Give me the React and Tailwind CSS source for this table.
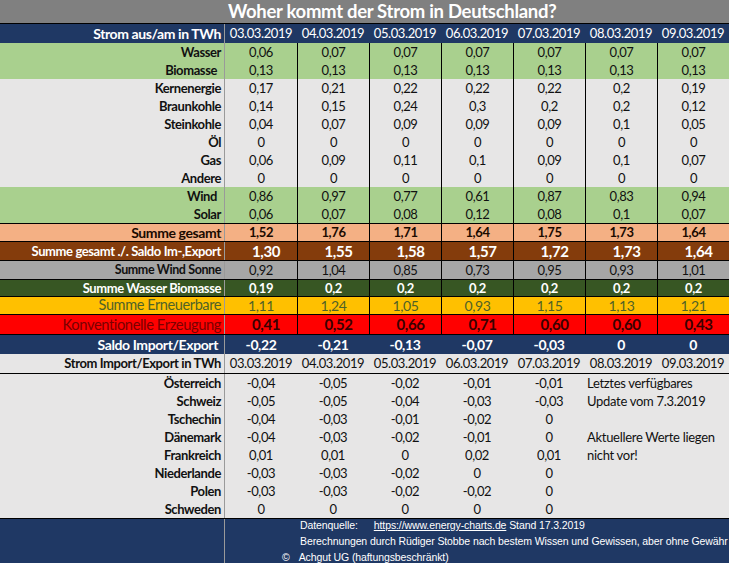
import React from "react";

const dates = ["03.03.2019", "04.03.2019", "05.03.2019", "06.03.2019", "07.03.2019", "08.03.2019", "09.03.2019"];

const sources = [
    { label: "Wasser", bg: "bg-[#a9d08e]", values: ["0,06", "0,07", "0,07", "0,07", "0,07", "0,07", "0,07"] },
    { label: "Biomasse", bg: "bg-[#a9d08e]", pad: "pr-[7px]", values: ["0,13", "0,13", "0,13", "0,13", "0,13", "0,13", "0,13"] },
    { label: "Kernenergie", bg: "bg-[#e7e6e6]", values: ["0,17", "0,21", "0,22", "0,22", "0,22", "0,2", "0,19"] },
    { label: "Braunkohle", bg: "bg-[#e7e6e6]", values: ["0,14", "0,15", "0,24", "0,3", "0,2", "0,2", "0,12"] },
    { label: "Steinkohle", bg: "bg-[#e7e6e6]", values: ["0,04", "0,07", "0,09", "0,09", "0,09", "0,1", "0,05"] },
    { label: "Öl", bg: "bg-[#e7e6e6]", values: ["0", "0", "0", "0", "0", "0", "0"] },
    { label: "Gas", bg: "bg-[#e7e6e6]", values: ["0,06", "0,09", "0,11", "0,1", "0,09", "0,1", "0,07"] },
    { label: "Andere", bg: "bg-[#e7e6e6]", values: ["0", "0", "0", "0", "0", "0", "0"] },
    { label: "Wind", bg: "bg-[#a9d08e]", pad: "pr-[7px]", values: ["0,86", "0,97", "0,77", "0,61", "0,87", "0,83", "0,94"] },
    { label: "Solar", bg: "bg-[#a9d08e]", values: ["0,06", "0,07", "0,08", "0,12", "0,08", "0,1", "0,07"] },
];

const sums = [
    {
        label: "Summe gesamt", h: "h-[18px]", bg: "bg-[#f4b084]",
        labelCls: "text-[14px] font-bold text-[#1a0a00]", valueCls: "font-bold text-[#1a0a00]",
        values: ["1,52", "1,76", "1,71", "1,64", "1,75", "1,73", "1,64"],
    },
    {
        label: "Summe gesamt ./. Saldo Im-,Export", h: "h-[19px]", bg: "bg-[#843c0c]",
        labelCls: "font-bold text-white", valueCls: "font-bold text-white text-[15px] pl-[10px]",
        values: ["1,30", "1,55", "1,58", "1,57", "1,72", "1,73", "1,64"],
    },
    {
        label: "Summe Wind Sonne", h: "h-[19px]", bg: "bg-[#a6a6a6]",
        labelCls: "text-[12.5px] font-bold text-[#111]", valueCls: "text-[#111]",
        values: ["0,92", "1,04", "0,85", "0,73", "0,95", "0,93", "1,01"],
    },
    {
        label: "Summe Wasser Biomasse", h: "h-[17px]", bg: "bg-[#375623]",
        labelCls: "font-bold text-white", valueCls: "font-bold text-white",
        values: ["0,19", "0,2", "0,2", "0,2", "0,2", "0,2", "0,2"],
    },
    {
        label: "Summe Erneuerbare", h: "h-[18px]", bg: "bg-[#ffc000]",
        labelCls: "text-[14.5px] text-[#4f6228]", valueCls: "text-[14px] text-[#4f6228]",
        values: ["1,11", "1,24", "1,05", "0,93", "1,15", "1,13", "1,21"],
    },
    {
        label: "Konventionelle Erzeugung", h: "h-[20px]", bg: "bg-[#ff0000]",
        labelCls: "text-[14.7px] text-[#7a0000]", valueCls: "text-[15px] font-bold text-[#3a0000] pl-[10px]",
        values: ["0,41", "0,52", "0,66", "0,71", "0,60", "0,60", "0,43"],
    },
];

const countries = [
    { label: "Österreich", values: ["-0,04", "-0,05", "-0,02", "-0,01", "-0,01"], note: "Letztes verfügbares" },
    { label: "Schweiz", values: ["-0,05", "-0,05", "-0,04", "-0,03", "-0,03"], note: "Update vom 7.3.2019" },
    { label: "Tschechin", values: ["-0,04", "-0,03", "-0,01", "-0,02", "0"] },
    { label: "Dänemark", values: ["-0,04", "-0,03", "-0,02", "-0,01", "0"], note: "Aktuellere Werte liegen" },
    { label: "Frankreich", values: ["0,01", "0,01", "0", "0,02", "0,01"], note: "nicht vor!" },
    { label: "Niederlande", values: ["-0,03", "-0,03", "-0,02", "0", "0"] },
    { label: "Polen", values: ["-0,03", "-0,03", "-0,02", "-0,02", "0"] },
    { label: "Schweden", values: ["0", "0", "0", "0", "0"] },
];

const gridCols = "grid grid-cols-[225px_repeat(7,72px)]";

const DataRow = ({ label, values, bg, h = "h-[18px]", labelCls = "font-bold text-[#111]", valueCls = "text-[#111]", top = "", pad = "pr-[3px]" }) => (
    <div className={`${gridCols} ${h} ${bg} ${top} items-center`}>
        <div className={`h-full flex items-center justify-end ${pad} border-r border-[#9a9a9a] whitespace-nowrap ${labelCls}`}>{label}</div>
        {values.map((v, i) => (
            <div key={i} className={`h-full flex items-center justify-center ${i > 0 ? "border-l border-black" : ""} ${valueCls}`}>{v}</div>
        ))}
    </div>
);

export default function App() {
    return (
        <div className="w-[729px] h-[563px] overflow-hidden bg-[#e7e6e6] text-[13px] tracking-[-0.4px] leading-none" style={{ fontFamily: "Lato, 'Open Sans', sans-serif" }}>
            {/* title */}
            <div className="flex h-[24px] bg-[#808080] border-b border-black">
                <div className="w-[225px]" />
                <p className="pl-[3px] text-[18.5px] tracking-[-0.3px] font-bold text-white leading-[23px]">Woher kommt der Strom in Deutschland?</p>
            </div>

            {/* header */}
            <div className={`${gridCols} h-[19px] bg-[#1f3864] text-white`}>
                <div className="flex items-center justify-end pr-[3px] text-[14px] font-bold border-r border-[#9a9a9a]">Strom aus/am in TWh</div>
                {dates.map((d) => (
                    <div key={d} className="flex items-center justify-center">{d}</div>
                ))}
            </div>

            {sources.map((r) => (
                <DataRow key={r.label} {...r} />
            ))}

            {sums.map((r) => (
                <DataRow key={r.label} {...r} top="border-t border-black" />
            ))}

            {/* saldo */}
            <div className={`${gridCols} h-[20px] bg-[#1f3864] text-white font-bold text-[14px] border-t border-black`}>
                <div className="flex items-center justify-end pr-[6px] border-r border-[#9a9a9a]">Saldo Import/Export</div>
                {["-0,22", "-0,21", "-0,13", "-0,07", "-0,03", "0", "0"].map((v, i) => (
                    <div key={i} className="flex items-center justify-center">{v}</div>
                ))}
            </div>

            {/* import header */}
            <div className={`${gridCols} h-[20px] bg-[#e7e6e6] text-[#111] border-b border-black`}>
                <div className="flex items-center justify-end pr-[3px] font-bold border-r border-[#9a9a9a]">Strom Import/Export in TWh</div>
                {dates.map((d) => (
                    <div key={d} className="flex items-center justify-center">{d}</div>
                ))}
            </div>

            {countries.map((c) => (
                <div key={c.label} className={`${gridCols} h-[18px] text-[#111]`}>
                    <div className="flex items-center justify-end pr-[3px] font-bold border-r border-[#9a9a9a]">{c.label}</div>
                    {c.values.map((v, i) => (
                        <div key={i} className="flex items-center justify-center">{v}</div>
                    ))}
                    {c.note && (
                        <div className="col-span-2 flex items-center pl-[2px] whitespace-nowrap tracking-[-0.3px]">{c.note}</div>
                    )}
                </div>
            ))}

            {/* footer */}
            <div className="grid grid-cols-[225px_1fr] h-[45px] bg-[#1f3864] text-white border-t border-black text-[10.5px] tracking-[-0.1px]" style={{ fontFamily: "'Liberation Sans', sans-serif" }}>
                <div className="border-r border-[#9a9a9a]" />
                <div className="flex flex-col leading-[16px] whitespace-nowrap -mt-[2px]">
                    <p className="pl-[75px]">
                        Datenquelle:<span className="ml-[16px] underline">https://www.energy-charts.de</span> Stand  17.3.2019
                    </p>
                    <p className="pl-[75px]">Berechnungen durch Rüdiger Stobbe nach bestem Wissen und Gewissen, aber ohne Gewähr</p>
                    <p className="pl-[57px]">
                        ©<span className="ml-[9px]">Achgut UG (haftungsbeschränkt)</span>
                    </p>
                </div>
            </div>
        </div>
    );
}
